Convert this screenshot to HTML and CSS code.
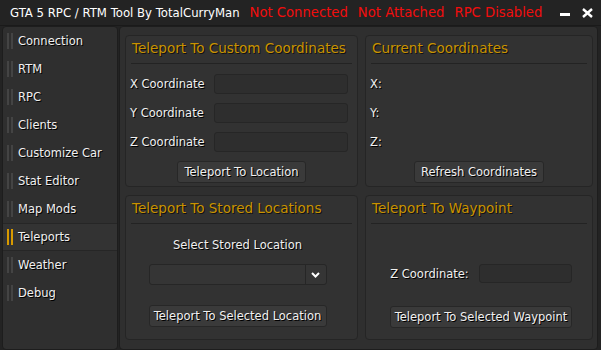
FILE: index.html
```html
<!DOCTYPE html>
<html lang="en">
<head>
  <meta charset="UTF-8">
  <title>GTA 5 RPC / RTM Tool</title>
  <link rel="stylesheet" href="styles.css">
</head>
<body>
<div class="window">
  <div class="titlebar">
    <span class="title">GTA 5 RPC / RTM Tool By TotalCurryMan</span>
    <span class="status">Not Connected</span>
    <span class="status">Not Attached</span>
    <span class="status">RPC Disabled</span>
    <span class="win-btns">
      <span class="win-min"></span>
      <svg class="win-close" width="11" height="10" viewBox="0 0 11 10"><path d="M1 1 L10 9 M10 1 L1 9" stroke="#fff" stroke-width="2.4"/></svg>
    </span>
  </div>
  <div class="app">
    <div class="sidebar">
      <div class="nav-item"><span class="bars"></span>Connection</div>
      <div class="nav-item"><span class="bars"></span>RTM</div>
      <div class="nav-item"><span class="bars"></span>RPC</div>
      <div class="nav-item"><span class="bars"></span>Clients</div>
      <div class="nav-item"><span class="bars"></span>Customize Car</div>
      <div class="nav-item"><span class="bars"></span>Stat Editor</div>
      <div class="nav-item"><span class="bars"></span>Map Mods</div>
      <div class="nav-item active"><span class="bars"></span>Teleports</div>
      <div class="nav-item"><span class="bars"></span>Weather</div>
      <div class="nav-item"><span class="bars"></span>Debug</div>
    </div>
    <div class="main">
      <div class="card">
        <div class="card-head">Teleport To Custom Coordinates</div>
        <div class="card-body">
          <div class="row"><span class="lbl">X Coordinate</span><span class="input wide"></span></div>
          <div class="row"><span class="lbl">Y Coordinate</span><span class="input wide"></span></div>
          <div class="row"><span class="lbl">Z Coordinate</span><span class="input wide"></span></div>
          <div class="btn-row"><span class="btn">Teleport To Location</span></div>
        </div>
      </div>
      <div class="card">
        <div class="card-head">Current Coordinates</div>
        <div class="card-body">
          <div class="row"><span class="lbl">X:</span></div>
          <div class="row"><span class="lbl">Y:</span></div>
          <div class="row"><span class="lbl">Z:</span></div>
          <div class="btn-row"><span class="btn">Refresh Coordinates</span></div>
        </div>
      </div>
      <div class="card">
        <div class="card-head">Teleport To Stored Locations</div>
        <div class="card-body stored">
          <div class="caption">Select Stored Location</div>
          <div class="select"><span class="select-val"></span><span class="select-arrow"><svg width="9" height="6" viewBox="0 0 9 6"><path d="M1 1 L4.5 4.5 L8 1" fill="none" stroke="#fff" stroke-width="2"/></svg></span></div>
          <span class="btn full">Teleport To Selected Location</span>
        </div>
      </div>
      <div class="card">
        <div class="card-head">Teleport To Waypoint</div>
        <div class="card-body waypoint">
          <div class="row wp-row"><span class="lbl">Z Coordinate:</span><span class="input short"></span></div>
          <span class="btn full">Teleport To Selected Waypoint</span>
        </div>
      </div>
    </div>
  </div>
</div>
</body>
</html>
```

FILE: styles.css
```css
body {
  margin: 0;
  background: #222;
  font-family: "DejaVu Sans", Verdana, sans-serif;
  font-size: 11.5px;
  color: #f0f0f0;
}
.window {
  width: 601px;
  height: 350px;
  background: #232323;
}
.titlebar {
  display: flex;
  align-items: center;
  height: 26px;
  padding-left: 10px;
  border-bottom: 1px solid #1a1a1a;
  box-sizing: border-box;
}
.title {
  color: #fff;
  font-size: 11.7px;
  margin-right: 10px;
}
.status {
  color: #f20d0d;
  font-size: 13.2px;
  margin-right: 10px;
}
.win-btns {
  margin-left: auto;
  display: flex;
  align-items: center;
  gap: 12px;
  margin-right: 8px;
}
.win-min {
  display: block;
  width: 10px;
  height: 3px;
  background: #fff;
  margin-top: 3px;
}
.app {
  display: flex;
  gap: 1px;
  height: 324px;
  padding: 0 3px 2px 2px;
}
.sidebar {
  width: 116px;
  background: #2f2f2f;
  border: 1px solid #1d1d1d;
  border-radius: 4px;
  padding-top: 0;
  box-sizing: border-box;
}
.nav-item {
  display: flex;
  align-items: center;
  height: 28px;
  padding-left: 4px;
  box-sizing: border-box;
  text-shadow: 1px 1px 0 #000;
}
.nav-item.active {
  background: #333;
  border-top: 1px solid #262626;
  border-bottom: 1px solid #262626;
}
.bars {
  width: 6px;
  height: 16px;
  margin-right: 5px;
  border-left: 2px solid #444;
  border-right: 2px solid #444;
  box-sizing: border-box;
}
.active .bars {
  border-color: #d89a00;
}
.main {
  flex: 1;
  display: grid;
  grid-template-columns: 233px 1fr;
  grid-template-rows: 152px 145px;
  gap: 8px 7px;
  background: #2f2f2f;
  border: 1px solid #1d1d1d;
  border-radius: 4px;
  padding: 8px 4px 0 5px;
  box-sizing: border-box;
}
.card {
  background: #323232;
  border: 1px solid #252525;
  border-radius: 4px;
  display: flex;
  flex-direction: column;
}
.card-head {
  height: 27px;
  line-height: 25px;
  margin: 0 5px;
  padding-left: 1px;
  border-bottom: 1px solid #232323;
  color: #c99300;
  font-size: 13.5px;
  text-shadow: 1px 1px 0 #111;
}
.card-body {
  display: flex;
  flex-direction: column;
  padding: 10px 9px 0 4px;
}
.row {
  display: flex;
  align-items: center;
  height: 20px;
  margin-bottom: 9px;
}
.lbl {
  text-shadow: 1px 1px 0 #000;
}
.input {
  height: 20px;
  background: #2e2e2e;
  border: 1px solid #262626;
  border-radius: 3px;
  box-sizing: border-box;
}
.input.wide {
  width: 134px;
  margin-left: auto;
}
.btn-row {
  display: flex;
  justify-content: center;
  padding-left: 5px;
}
.btn {
  display: inline-block;
  height: 22px;
  line-height: 20px;
  padding: 0 6px;
  background: #3a3a3a;
  border: 1px solid #272727;
  border-radius: 3px;
  box-sizing: border-box;
  text-shadow: 1px 1px 0 #000;
  text-align: center;
}
.btn-row .btn {
  min-width: 126px;
}
.stored {
  align-items: center;
  padding: 14px 8px 0 0;
}
.caption {
  text-shadow: 1px 1px 0 #000;
  margin-bottom: 12px;
}
.select {
  display: flex;
  width: 178px;
  height: 21px;
  background: #353535;
  border: 1px solid #262626;
  border-radius: 3px;
  box-sizing: border-box;
  margin-bottom: 20px;
}
.select-val {
  flex: 1;
  border-right: 1px solid #262626;
}
.select-arrow {
  width: 20px;
  display: flex;
  align-items: center;
  justify-content: center;
}
.btn.full {
  width: 178px;
  padding: 0;
}
.waypoint {
  align-items: center;
  padding: 40px 2px 0 6px;
}
.wp-row {
  gap: 10px;
  margin-bottom: 23px;
  height: 19px;
}
.input.short {
  width: 93px;
  height: 19px;
}
.waypoint .btn.full {
  width: 182px;
}
```
